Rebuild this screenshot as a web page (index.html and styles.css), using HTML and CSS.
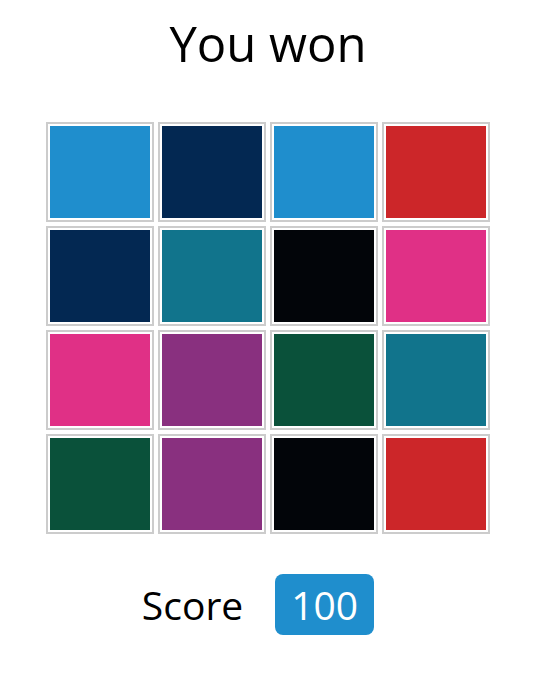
FILE: index.html
```html
<!DOCTYPE html>
<html>
<head>
<meta charset="utf-8">
<link rel="stylesheet" href="styles.css">
</head>
<body>
<div class="page">
  <h1 class="title">You won</h1>
  <div class="board">
    <div class="tile"><div class="c c-blue"></div></div>
    <div class="tile"><div class="c c-navy"></div></div>
    <div class="tile"><div class="c c-blue"></div></div>
    <div class="tile"><div class="c c-red"></div></div>
    <div class="tile"><div class="c c-navy"></div></div>
    <div class="tile"><div class="c c-teal"></div></div>
    <div class="tile"><div class="c c-black"></div></div>
    <div class="tile"><div class="c c-pink"></div></div>
    <div class="tile"><div class="c c-pink"></div></div>
    <div class="tile"><div class="c c-purple"></div></div>
    <div class="tile"><div class="c c-green"></div></div>
    <div class="tile"><div class="c c-teal"></div></div>
    <div class="tile"><div class="c c-green"></div></div>
    <div class="tile"><div class="c c-purple"></div></div>
    <div class="tile"><div class="c c-black"></div></div>
    <div class="tile"><div class="c c-red"></div></div>
  </div>
  <div class="score">
    <span class="score-label">Score</span>
    <span class="score-value">100</span>
  </div>
</div>
</body>
</html>
```
FILE: styles.css
```css
html, body {
  margin: 0;
  padding: 0;
  background: #fff;
}
body {
  font-family: "Open Sans", "DejaVu Sans", sans-serif;
  color: #000;
}
.page {
  width: 534px;
  display: flex;
  flex-direction: column;
  align-items: center;
}
.title {
  margin: 10px 0 0 0;
  font-size: 49px;
  font-weight: 400;
  line-height: 67px;
  padding-left: 2px;
}
.board {
  margin-top: 45px;
  margin-left: 2px;
  display: grid;
  grid-template-columns: repeat(4, 108px);
  grid-auto-rows: 100px;
  gap: 4px;
}
.tile {
  border: 2px solid #cccccc;
  padding: 2px;
  background: #fff;
}
.c {
  width: 100%;
  height: 100%;
}
.c-blue { background: #1f8ecd; }
.c-navy { background: #032852; }
.c-red { background: #cc2629; }
.c-teal { background: #11748c; }
.c-black { background: #020509; }
.c-pink { background: #e03086; }
.c-purple { background: #89307f; }
.c-green { background: #0a513a; }
.score {
  margin-top: 40px;
  margin-right: 18px;
  display: flex;
  align-items: center;
  gap: 32px;
}
.score-label {
  font-size: 39px;
  line-height: 61px;
}
.score-value {
  background: #1f8ecd;
  color: #fff;
  font-size: 39px;
  line-height: 61px;
  height: 61px;
  padding: 0 16px;
  border-radius: 8px;
}
```
